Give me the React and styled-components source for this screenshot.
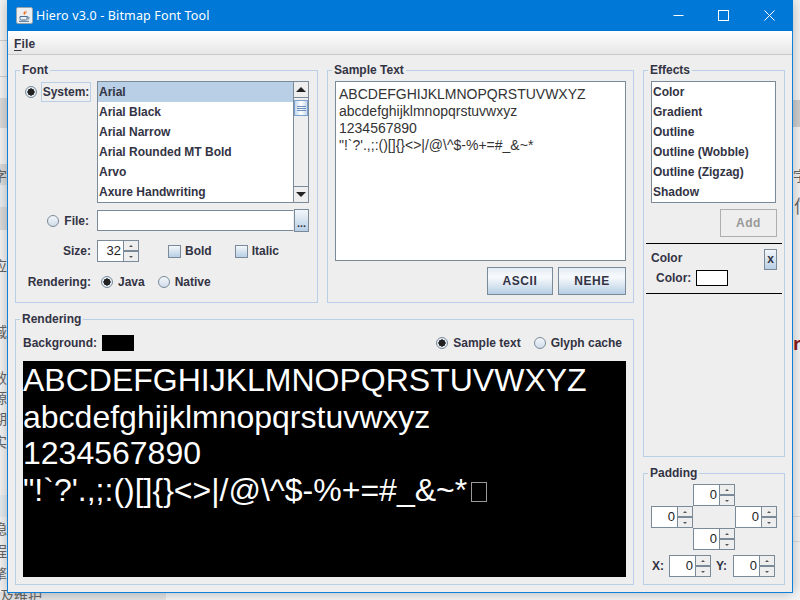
import React from 'react';
import styled, { createGlobalStyle } from 'styled-components';

const GlobalStyle = createGlobalStyle`
  * { box-sizing: border-box; }
  html, body { margin: 0; padding: 0; }
  body {
    width: 800px;
    height: 600px;
    overflow: hidden;
    background: #f4f4f4;
    font-family: 'Liberation Sans', Arial, sans-serif;
  }
`;

const Desktop = styled.div`
  position: relative;
  width: 800px;
  height: 600px;
  overflow: hidden;
  background: #f5f5f5;
`;

// bits of the page behind the window
const BackBand = styled.div`
  position: absolute;
  left: ${(p) => p.$x}px;
  top: ${(p) => p.$y}px;
  width: ${(p) => p.$w}px;
  height: ${(p) => p.$h}px;
  background: ${(p) => p.$bg};
`;

const BackText = styled.span`
  position: absolute;
  left: ${(p) => p.$x}px;
  top: ${(p) => p.$y}px;
  font: ${(p) => (p.$bold ? 'bold ' : '')}${(p) => p.$size || 14}px 'Noto Sans CJK SC', 'Liberation Sans', sans-serif;
  line-height: 16px;
  color: ${(p) => p.$color || '#666'};
  white-space: nowrap;
`;

const Window = styled.div`
  position: absolute;
  left: 7px;
  top: 0;
  width: 786px;
  height: 593px;
  display: flex;
  flex-direction: column;
  background: #eeeeee;
  border: 1px solid #0f7fdc;
  border-top: 0;
  box-shadow: 0 0 12px rgba(0, 0, 0, 0.28);
`;

const TitleBar = styled.div`
  flex: none;
  height: 31px;
  margin: 0 -1px;
  padding-left: 9px;
  display: flex;
  align-items: center;
  background: #0078d7;
`;

const TitleText = styled.span`
  margin-left: 3px;
  font: 12.5px 'Noto Sans', sans-serif;
  letter-spacing: 0.15px;
  color: #fff;
`;

const Caption = styled.div`
  margin-left: auto;
  display: flex;
  align-items: center;
`;

const CaptionButton = styled.div`
  width: ${(p) => p.$w || 45}px;
  height: 31px;
  display: flex;
  align-items: center;
  justify-content: center;
`;

const MenuBar = styled.div`
  flex: none;
  height: 24px;
  padding: 3px 0 0 6px;
  background: linear-gradient(#ffffff, #e6e6e6);
  border-bottom: 1px solid #c9c9c9;
`;

const MenuItem = styled.span`
  font-size: 12px;
  font-weight: bold;
  line-height: 16px;
  color: #333344;
  letter-spacing: 0.2px;
  u { text-decoration-thickness: 1px; text-underline-offset: 2px; }
`;

const Main = styled.div`
  flex: 1;
  display: grid;
  grid-template-columns: 619px 142px;
  column-gap: 9px;
  padding: 8px 7px 6px;
`;

const Column = styled.div`
  display: grid;
  grid-template-rows: ${(p) => p.$rows};
  row-gap: 9px;
  min-height: 0;
`;

const TopRow = styled.div`
  display: grid;
  grid-template-columns: 303px 307px;
  column-gap: 9px;
`;

const Panel = styled.fieldset`
  margin: 0;
  padding: 0;
  min-width: 0;
  border: 1px solid #b8cfe5;
`;

const Legend = styled.legend`
  margin-left: 4px;
  padding: 0 2px;
  font-size: 12px;
  font-weight: bold;
  line-height: 14px;
  color: #333344;
`;

const Label = styled.span`
  font-size: 12px;
  font-weight: bold;
  line-height: 16px;
  color: #333344;
  white-space: nowrap;
  margin-right: ${(p) => p.$mr || 0}px;
`;

const FontForm = styled.div`
  display: grid;
  grid-template-columns: 75px 212px;
  grid-template-rows: 122px 29px 30px 32px;
  column-gap: 6px;
  padding-top: 4px;
  align-items: end;
`;

const LabelCell = styled.div`
  height: ${(p) => p.$h || 22}px;
  display: flex;
  align-items: center;
  justify-content: flex-end;
  gap: ${(p) => p.$gap || 0}px;
  align-self: ${(p) => (p.$top ? 'start' : 'end')};
  margin-top: ${(p) => (p.$top ? 1 : 0)}px;
`;

const ControlRow = styled.div`
  display: flex;
  align-items: center;
  height: ${(p) => p.$h || 22}px;
`;

const RadioDot = styled.span`
  flex: none;
  width: 12px;
  height: 12px;
  border-radius: 50%;
  border: 1px solid #7a8a99;
  background: ${(p) =>
    p.$on
      ? 'radial-gradient(circle, #222 0 3.4px, #e4ebf3 3.8px)'
      : 'linear-gradient(#f4f7fa, #cfdcea)'};
`;

const RadioItem = styled.span`
  display: inline-flex;
  align-items: center;
  gap: 5px;
  margin-left: ${(p) => p.$ml || 0}px;
`;

const Radio = ({ on, ml, children }) => (
  <RadioItem $ml={ml}>
    <RadioDot $on={on} />
    {children && <Label>{children}</Label>}
  </RadioItem>
);

const SystemButton = styled.span`
  width: 50px;
  height: 20px;
  display: flex;
  align-items: center;
  justify-content: center;
  border: 1px solid #b8cfe5;
`;

const ListBox = styled.div`
  position: relative;
  height: 122px;
  display: flex;
  background: #fff;
  border: 1px solid #7a8a99;
`;

const ListRows = styled.div`
  flex: 1;
  min-width: 0;
`;

const ListRow = styled.div`
  height: 20px;
  padding-left: 1px;
  font-size: 12px;
  font-weight: bold;
  line-height: 20px;
  color: #333344;
  background: ${(p) => (p.$selected ? '#b8cfe5' : 'transparent')};
  white-space: nowrap;
`;

const ScrollBar = styled.div`
  flex: none;
  width: 15px;
  display: flex;
  flex-direction: column;
  background: #eeeeee;
  border-left: 1px solid #7a8a99;
`;

const ScrollArrow = styled.div`
  flex: none;
  height: 16px;
  display: flex;
  align-items: center;
  justify-content: center;
  background: #eeeeee;
  border-${(p) => (p.$down ? 'top' : 'bottom')}: 1px solid #7a8a99;
  &::after {
    content: '';
    width: 0;
    height: 0;
    border-left: 5px solid transparent;
    border-right: 5px solid transparent;
    ${(p) => (p.$down ? 'border-top' : 'border-bottom')}: 5px solid #222;
  }
`;

const ScrollTrack = styled.div`
  flex: 1;
  padding-top: 2px;
`;

const ScrollThumb = styled.div`
  height: 16px;
  display: flex;
  flex-direction: column;
  align-items: center;
  justify-content: center;
  gap: 1px;
  background: linear-gradient(90deg, #c5d8ea, #ffffff 50%, #c5d8ea);
  border: 1px solid #7a9fd0;
  span {
    width: 9px;
    height: 1px;
    background: #6a8fc0;
  }
`;

const TextField = styled.div`
  flex: none;
  width: 197px;
  height: 21px;
  background: #fff;
  border: 1px solid #7a8a99;
  border-right-color: #eeeeee;
`;

const DotsButton = styled.div`
  flex: none;
  width: 15px;
  height: 23px;
  margin-left: 0;
  padding-top: 6px;
  text-align: center;
  font-size: 11px;
  font-weight: bold;
  line-height: 14px;
  color: #333344;
  background: linear-gradient(#f4f7fa, #b8cfe5);
  border: 1px solid #7a8a99;
`;

const SpinnerBox = styled.div`
  flex: none;
  width: 42px;
  height: 22px;
  display: flex;
`;

const SpinnerField = styled.div`
  width: 26px;
  padding-right: 2px;
  text-align: right;
  font-size: 13px;
  line-height: 20px;
  color: #222;
  background: #fff;
  border: 1px solid #7a8a99;
  border-right: 0;
`;

const SpinnerButtons = styled.div`
  width: 16px;
  display: flex;
  flex-direction: column;
  border: 1px solid #7a8a99;
`;

const SpinnerArrow = styled.div`
  flex: 1;
  display: flex;
  align-items: center;
  justify-content: center;
  background: #eeeeee;
  border-top: ${(p) => (p.$down ? '2px solid #7a8a99' : '0')};
  &::after {
    content: '';
    width: 0;
    height: 0;
    border-left: 2px solid transparent;
    border-right: 2px solid transparent;
    ${(p) => (p.$down ? 'border-top' : 'border-bottom')}: 2px solid #555;
  }
`;

const Spinner = ({ value }) => (
  <SpinnerBox>
    <SpinnerField>{value}</SpinnerField>
    <SpinnerButtons>
      <SpinnerArrow />
      <SpinnerArrow $down />
    </SpinnerButtons>
  </SpinnerBox>
);

const CheckBox = styled.span`
  flex: none;
  width: 13px;
  height: 13px;
  margin-left: ${(p) => p.$ml}px;
  margin-right: 4px;
  border: 1px solid #7a8a99;
  background: linear-gradient(#f4f7fa, #b8cfe5);
`;

const SamplePanel = styled.div`
  padding: 4px 7px 0;
  display: flex;
  flex-direction: column;
`;

const SampleArea = styled.div`
  height: 180px;
  padding: 4px 3px;
  font-size: 14px;
  line-height: 17px;
  color: #333;
  background: #fff;
  border: 1px solid #7a8a99;
  white-space: pre;
`;

const ButtonRow = styled.div`
  display: flex;
  justify-content: flex-end;
  gap: 5px;
  margin-top: 6px;
`;

const MetalButton = styled.div`
  width: ${(p) => p.$w}px;
  height: ${(p) => p.$h || 28}px;
  display: flex;
  align-items: center;
  justify-content: center;
  font-size: 12px;
  font-weight: bold;
  letter-spacing: 0.6px;
  color: #333344;
  background: linear-gradient(#e3ecf5, #f8fafc 35%, #b8cfe5);
  border: 1px solid #7a8a99;
`;

const DisabledButton = styled(MetalButton)`
  color: #999999;
  background: #eeeeee;
  border-color: #aeaeae;
`;

const RenderHead = styled.div`
  height: 16px;
  margin-top: 9px;
  padding: 0 11px 0 7px;
  display: flex;
  align-items: center;
`;

const Swatch = styled.span`
  flex: none;
  width: 32px;
  height: 16px;
  margin-left: 5px;
  background: ${(p) => p.$color};
  border: 1px solid #000;
`;

const RadioGroup = styled.div`
  margin-left: auto;
  display: flex;
  align-items: center;
`;

const Preview = styled.div`
  height: 216px;
  margin: 10px 7px 0;
  padding-top: 1px;
  font-size: 32px;
  line-height: 36.67px;
  color: #fff;
  background: #000;
  white-space: pre;
`;

const MissingGlyph = styled.span`
  display: inline-block;
  width: 16px;
  height: 20px;
  margin-left: 4px;
  vertical-align: -1px;
  border: 1px solid #999;
`;

const EffectsBody = styled.div`
  padding: 4px 8px 0 7px;
`;

const AddRow = styled.div`
  display: flex;
  justify-content: flex-end;
  margin: 6px -1px 0 0;
`;

const EffectBlock = styled.div`
  margin: 6px -6px 0 -5px;
  padding: 5px 5px 5px 5px;
  height: 51px;
  border-top: 1px solid #000;
  border-bottom: 1px solid #000;
`;

const EffectHead = styled.div`
  display: flex;
  align-items: flex-start;
  justify-content: space-between;
`;

const RemoveButton = styled.div`
  width: 13px;
  height: 21px;
  text-align: center;
  font-size: 12px;
  font-weight: bold;
  line-height: 19px;
  color: #333344;
  background: linear-gradient(#f4f7fa, #b8cfe5);
  border: 1px solid #7a8a99;
`;

const EffectRow = styled.div`
  display: flex;
  align-items: center;
  height: 16px;
  margin-left: 5px;
`;

const HeadLabel = styled(Label)`
  margin-top: 1px;
`;

const PaddingBody = styled.div`
  padding: 4px 0 0 7px;
`;

const PaddingCross = styled.div`
  display: grid;
  grid-template-columns: repeat(3, 42px);
  grid-auto-rows: 22px;
`;

const CrossCell = styled.div`
  grid-column: ${(p) => p.$col};
`;

const XYRow = styled.div`
  display: flex;
  align-items: center;
  margin-top: 5px;
  padding-left: 1px;
`;

const AxisLabel = styled(Label)`
  width: ${(p) => p.$w}px;
  padding-left: ${(p) => p.$pl || 0}px;
`;

const JavaIcon = () => (
  <svg width="17" height="17" viewBox="0 0 17 17">
    <rect x="0.5" y="0.5" width="16" height="16" rx="1.5" fill="#eceff1" stroke="#9aa4ad" />
    <path d="M9 2.5c1 1.6-2.4 2.6-1.4 4.6.4.7.9 1 1 1.7-.2-1 .2-1.6 1.2-2.5 1-.9 1.6-1.6.8-2.6.1 1-1 1.4-1.4 2-.3-1.1.5-2.2-.2-3.2z" fill="#e8762c" />
    <path d="M4 9.5h7v2.3c0 .8-.8 1.2-1.6 1.2H5.6C4.800 13 4 12.6 4 11.8z" fill="none" stroke="#4a6f93" strokeWidth="1" />
    <path d="M11 10h1.3c1.3 0 1.3 2-.8 2.2M3 14.300h10" fill="none" stroke="#4a6f93" strokeWidth="1" />
  </svg>
);

const fontNames = ['Arial', 'Arial Black', 'Arial Narrow', 'Arial Rounded MT Bold', 'Arvo', 'Axure Handwriting'];
const effectNames = ['Color', 'Gradient', 'Outline', 'Outline (Wobble)', 'Outline (Zigzag)', 'Shadow'];
const sampleText = 'ABCDEFGHIJKLMNOPQRSTUVWXYZ\nabcdefghijklmnopqrstuvwxyz\n1234567890\n"!`?\'.,;:()[]{}<>|/@\\^$-%+=#_&~*';

export default function App() {
  return (
    <Desktop>
      <GlobalStyle />
      <BackBand $x={0} $y={40} $w={7} $h={1} $bg="#d0d0d0" />
      <BackBand $x={0} $y={76} $w={7} $h={1} $bg="#d0d0d0" />
      <BackBand $x={0} $y={98} $w={7} $h={30} $bg="#dcdcdc" />
      <BackBand $x={0} $y={164} $w={7} $h={21} $bg="#dcdcdc" />
      <BackBand $x={0} $y={185} $w={7} $h={22} $bg="#e9eef0" />
      <BackBand $x={0} $y={207} $w={7} $h={23} $bg="#dcdcdc" />
      <BackBand $x={0} $y={495} $w={7} $h={22} $bg="#e6edf0" />
      <BackBand $x={793} $y={100} $w={7} $h={27} $bg="#cfcfcf" />
      <BackBand $x={793} $y={516} $w={7} $h={1} $bg="#dddddd" />
      <BackBand $x={793} $y={541} $w={7} $h={1} $bg="#dddddd" />
      <BackBand $x={0} $y={592} $w={166} $h={8} $bg="#e4e4e4" />
      <BackText $x={-7} $y={167}>字</BackText>
      <BackText $x={-7} $y={257}>应</BackText>
      <BackText $x={-7} $y={323}>域</BackText>
      <BackText $x={-7} $y={369}>效</BackText>
      <BackText $x={-7} $y={389}>源</BackText>
      <BackText $x={-7} $y={410}>期</BackText>
      <BackText $x={-7} $y={433}>实</BackText>
      <BackText $x={-7} $y={520}>稳</BackText>
      <BackText $x={-7} $y={542}>程</BackText>
      <BackText $x={-7} $y={565}>擎</BackText>
      <BackText $x={0} $y={587}>及维护</BackText>
      <BackText $x={793} $y={167}>字</BackText>
      <BackText $x={794} $y={197} $size={18}>信</BackText>
      <BackText $x={793} $y={334} $size={18} $bold $color="#8b1a1a">re</BackText>
      <Window>
        <TitleBar>
          <JavaIcon />
          <TitleText>Hiero v3.0 - Bitmap Font Tool</TitleText>
          <Caption>
            <CaptionButton>
              <svg width="11" height="11" viewBox="0 0 11 11"><path d="M0.5 5.5h10" stroke="#fff" /></svg>
            </CaptionButton>
            <CaptionButton>
              <svg width="11" height="11" viewBox="0 0 11 11"><rect x="0.5" y="0.5" width="10" height="10" fill="none" stroke="#fff" /></svg>
            </CaptionButton>
            <CaptionButton $w={47}>
              <svg width="11" height="11" viewBox="0 0 11 11"><path d="M0.5 0.5l10 10M10.5 0.5l-10 10" stroke="#fff" /></svg>
            </CaptionButton>
          </Caption>
        </TitleBar>
        <MenuBar>
          <MenuItem><u>F</u>ile</MenuItem>
        </MenuBar>
        <Main>
          <Column $rows="240px 273px">
            <TopRow>
              <Panel>
                <Legend>Font</Legend>
                <FontForm>
                  <LabelCell $top $h={20} $gap={4}>
                    <Radio on />
                    <SystemButton><Label>System:</Label></SystemButton>
                  </LabelCell>
                  <ListBox>
                    <ListRows>
                      {fontNames.map((name, i) => (
                        <ListRow key={name} $selected={i === 0}>{name}</ListRow>
                      ))}
                    </ListRows>
                    <ScrollBar>
                      <ScrollArrow />
                      <ScrollTrack>
                        <ScrollThumb><span /><span /><span /></ScrollThumb>
                      </ScrollTrack>
                      <ScrollArrow $down />
                    </ScrollBar>
                  </ListBox>
                  <LabelCell $h={23} $gap={5}>
                    <Radio on={false} />
                    <Label $mr={2}>File:</Label>
                  </LabelCell>
                  <ControlRow $h={23}>
                    <TextField />
                    <DotsButton>...</DotsButton>
                  </ControlRow>
                  <LabelCell><Label>Size:</Label></LabelCell>
                  <ControlRow>
                    <Spinner value="32" />
                    <CheckBox $ml={29} />
                    <Label>Bold</Label>
                    <CheckBox $ml={23} />
                    <Label>Italic</Label>
                  </ControlRow>
                  <LabelCell $h={24}><Label>Rendering:</Label></LabelCell>
                  <ControlRow $h={24}>
                    <Radio on ml={4}>Java</Radio>
                    <Radio on={false} ml={13}>Native</Radio>
                  </ControlRow>
                </FontForm>
              </Panel>
              <Panel>
                <Legend>Sample Text</Legend>
                <SamplePanel>
                  <SampleArea>{sampleText}</SampleArea>
                  <ButtonRow>
                    <MetalButton $w={66}>ASCII</MetalButton>
                    <MetalButton $w={68}>NEHE</MetalButton>
                  </ButtonRow>
                </SamplePanel>
              </Panel>
            </TopRow>
            <Panel>
              <Legend>Rendering</Legend>
              <RenderHead>
                <Label>Background:</Label>
                <Swatch $color="#000" />
                <RadioGroup>
                  <Radio on>Sample text</Radio>
                  <Radio on={false} ml={13}>Glyph cache</Radio>
                </RadioGroup>
              </RenderHead>
              <Preview>{sampleText}<MissingGlyph /></Preview>
            </Panel>
          </Column>
          <Column $rows="394px 119px">
            <Panel>
              <Legend>Effects</Legend>
              <EffectsBody>
                <ListBox>
                  <ListRows>
                    {effectNames.map((name) => (
                      <ListRow key={name}>{name}</ListRow>
                    ))}
                  </ListRows>
                </ListBox>
                <AddRow>
                  <DisabledButton $w={57}>Add</DisabledButton>
                </AddRow>
                <EffectBlock>
                  <EffectHead>
                    <HeadLabel>Color</HeadLabel>
                    <RemoveButton>x</RemoveButton>
                  </EffectHead>
                  <EffectRow>
                    <Label>Color:</Label>
                    <Swatch $color="#fff" />
                  </EffectRow>
                </EffectBlock>
              </EffectsBody>
            </Panel>
            <Panel>
              <Legend>Padding</Legend>
              <PaddingBody>
                <PaddingCross>
                  <CrossCell $col={2}><Spinner value="0" /></CrossCell>
                  <CrossCell $col={1}><Spinner value="0" /></CrossCell>
                  <CrossCell $col={3}><Spinner value="0" /></CrossCell>
                  <CrossCell $col={2}><Spinner value="0" /></CrossCell>
                </PaddingCross>
                <XYRow>
                  <AxisLabel $w={17}>X:</AxisLabel>
                  <Spinner value="0" />
                  <AxisLabel $w={22} $pl={5}>Y:</AxisLabel>
                  <Spinner value="0" />
                </XYRow>
              </PaddingBody>
            </Panel>
          </Column>
        </Main>
      </Window>
    </Desktop>
  );
}
